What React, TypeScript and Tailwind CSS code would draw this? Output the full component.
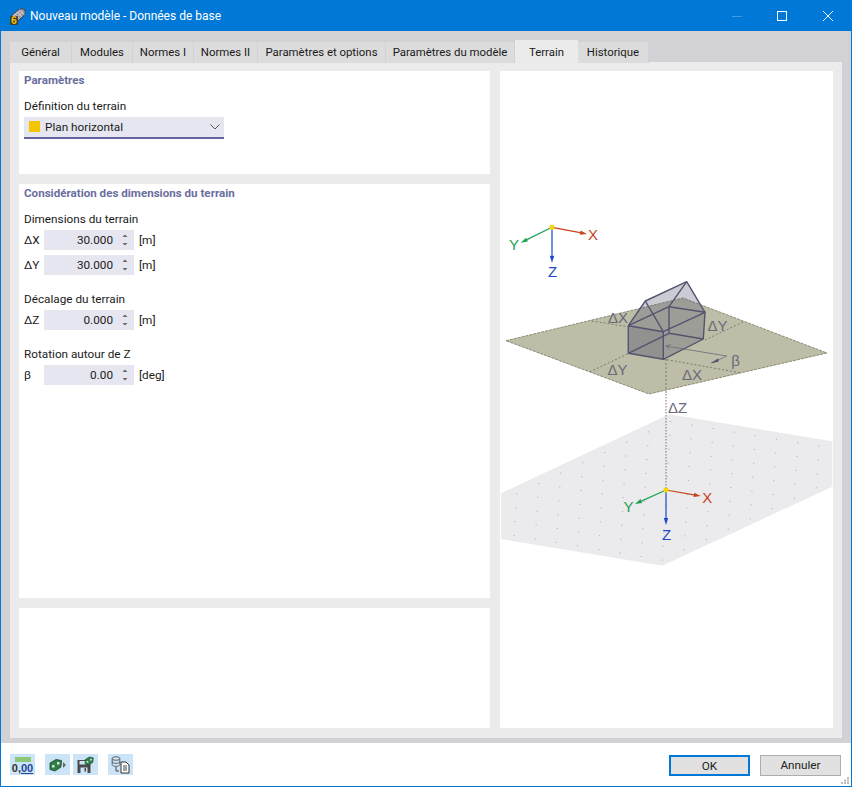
const FONT = "font-['Roboto',sans-serif]";

const TABS = [
  { label: "Général", w: "w-[62px]" },
  { label: "Modules", w: "w-[61px]" },
  { label: "Normes I", w: "w-[61px]" },
  { label: "Normes II", w: "w-[64px]" },
  { label: "Paramètres et options", w: "w-[128px]" },
  { label: "Paramètres du modèle", w: "w-[129px]" },
  { label: "Terrain", w: "w-[63px]", active: true },
  { label: "Historique", w: "w-[71px]" },
];

function TitleIcon() {
  return (
    <svg width="18" height="18" viewBox="0 0 18 18">
      <path d="M2.5 8.5 L10 2.5 Q13.5 0.5 15.8 3 Q17.2 6 15 8.5 L8.5 14.5 Z" fill="#9a9aa2" stroke="#34343c" strokeWidth="0.9" />
      <path d="M5.5 6.5 L10.5 12 M8 4.5 L13 10 M10.5 2.5 L15.5 8 M4 9.5 L11 3.5 M6 11.5 L14 5" stroke="#e2e2e6" strokeWidth="0.7" />
      <rect x="1" y="9" width="8" height="9" rx="1" fill="#3d3d38" />
      <text x="5" y="17.2" textAnchor="middle" fontSize="10.5" fontWeight="700" fill="#f2c200" fontFamily="Liberation Sans, sans-serif">6</text>
    </svg>
  );
}

function Spinner({ value, unit }: { value: string; unit: string }) {
  return (
    <div className="flex items-center">
      <div className="flex h-5 w-[90px] items-center bg-[#e6e6f0]">
        <span className="w-[69px] pt-[1px] text-right text-[#222]">{value}</span>
        <svg width="10" height="14" viewBox="0 0 10 14" className="ml-[7px]">
          <path d="M2.5 4 L5 1.5 L7.5 4 Z" fill="#666" />
          <path d="M2.5 10 L5 12.5 L7.5 10 Z" fill="#666" />
        </svg>
      </div>
      <span className="ml-[5px] pt-[1px]">{unit}</span>
    </div>
  );
}

function FieldRow({ label, value, unit, className }: { label: string; value: string; unit: string; className?: string }) {
  return (
    <div className={`flex items-center ${className ?? ""}`}>
      <span className="w-5 pt-[1px]">{label}</span>
      <Spinner value={value} unit={unit} />
    </div>
  );
}

function Axes({ o, x, y, z, lx, ly, lz }: { o: number[]; x: number[]; y: number[]; z: number[]; lx: number[]; ly: number[]; lz: number[] }) {
  const head = (from: number[], to: number[], color: string) => {
    const dx = to[0] - from[0];
    const dy = to[1] - from[1];
    const len = Math.hypot(dx, dy);
    const ux = dx / len;
    const uy = dy / len;
    const bx = to[0] - ux * 7;
    const by = to[1] - uy * 7;
    const pts = `${to[0]},${to[1]} ${bx - uy * 2.2},${by + ux * 2.2} ${bx + uy * 2.2},${by - ux * 2.2}`;
    return (
      <g>
        <line x1={from[0]} y1={from[1]} x2={bx} y2={by} stroke={color} strokeWidth="1.2" />
        <polygon points={pts} fill={color} />
      </g>
    );
  };
  return (
    <g fontFamily="Liberation Sans, sans-serif" fontSize="15" textAnchor="middle">
      {head(o, x, "#c8431c")}
      {head(o, y, "#1ea152")}
      {head(o, z, "#1c46c8")}
      <circle cx={o[0]} cy={o[1]} r="2.6" fill="#f4d40a" />
      <text x={lx[0]} y={lx[1]} fill="#c8431c">X</text>
      <text x={ly[0]} y={ly[1]} fill="#1ea152">Y</text>
      <text x={lz[0]} y={lz[1]} fill="#1c46c8">Z</text>
    </g>
  );
}

function TerrainPicture() {
  const dots: { x: number; y: number }[] = [];
  for (let i = 0; i < 13; i++) {
    for (let j = 0; j < 13; j++) {
      dots.push({ x: 670 + i * 21.17 - j * 22, y: 421 + i * 3.53 + j * 10.33 });
    }
  }
  const house = "#54546f";
  const dim = "#6b6b60";
  return (
    <svg width="333" height="657" viewBox="500 71 333 657" className="block">
      <clipPath id="lower">
        <polygon points="669.3,414.3 832.3,441.3 832.3,486.7 662.3,565.7 501,539 501,493.3" />
      </clipPath>
      <polygon points="669.3,414.3 832.3,441.3 832.3,486.7 662.3,565.7 501,539 501,493.3" fill="#ebebee" />
      <g clipPath="url(#lower)">
        {dots.map((d, i) => (
          <rect key={i} x={d.x} y={d.y} width="1.2" height="1" fill="#b4b4b8" />
        ))}
      </g>
      <line x1="666" y1="394" x2="666" y2="490" stroke="#70707a" strokeWidth="1" strokeDasharray="1.5 1.5" />

      <polygon points="506,340.7 683,298 827,353 649,394" fill="#bdbda8" stroke="#77775c" strokeWidth="0.8" strokeDasharray="3 1" />
      <g stroke={dim} strokeWidth="0.8" strokeDasharray="2 2" fill="none">
        <line x1="591.7" y1="321" x2="627.7" y2="326.7" />
        <line x1="705" y1="340" x2="743" y2="322" />
        <line x1="627.7" y1="354" x2="590" y2="371.7" />
        <line x1="663" y1="359" x2="740" y2="372.7" />
        <line x1="666" y1="359" x2="666" y2="394" />
      </g>

      <polygon points="628.3,325.7 645.3,301 686.7,281.7 705,312.3 703.3,339 663.3,359.3 628.3,353.3" fill="#54546f" fillOpacity="0.3" />
      <polygon points="628.3,325.7 663.3,331.7 663.3,359.3 628.3,353.3" fill="#54546f" fillOpacity="0.16" />
      <g stroke={house} strokeWidth="1.4" fill="none" strokeLinejoin="round">
        <polyline points="628.3,325.7 628.3,353.3 663.3,359.3 663.3,331.7 628.3,325.7" />
        <polyline points="663.3,359.3 703.3,339 705,312.3 669,306.7 669,333.3 703.3,339" />
        <polyline points="628.3,325.7 645.3,301 686.7,281.7 705,312.3" />
        <polyline points="645.3,301 663.3,331.7" />
        <polyline points="686.7,281.7 669,306.7 628.3,325.7" />
        <polyline points="663.3,331.7 705,312.3" />
        <polyline points="628.3,353.3 669,333.3" />
      </g>
      <g stroke="#6b6b76" strokeWidth="0.8" fill="none">
        <polyline points="665.7,346 726.7,356 712,363" />
        <polyline points="671,344.5 665.7,346 670,349.5" />
      </g>
      <polygon points="710,363.5 718,358.5 719,361.5" fill="#54546f" />

      <g fontFamily="Liberation Sans, sans-serif" fontSize="15" fill="#6a6a78" textAnchor="middle">
        <text x="618" y="323">ΔX</text>
        <text x="717.5" y="330.5">ΔY</text>
        <text x="617.5" y="374.5">ΔY</text>
        <text x="692" y="379.5">ΔX</text>
        <text x="735.5" y="365.5">β</text>
        <text x="677.5" y="413">ΔZ</text>
      </g>

      <Axes o={[552, 227.3]} x={[587, 234]} y={[520.7, 242.7]} z={[552, 262.7]} lx={[593, 240]} ly={[514, 249.5]} lz={[552.5, 277]} />
      <Axes o={[666, 490]} x={[700.7, 496]} y={[635, 504]} z={[666, 525]} lx={[707.3, 502.5]} ly={[628.5, 512]} lz={[666.5, 539.5]} />
    </svg>
  );
}

function ToolButton({ children }: { children: React.ReactNode }) {
  return <button className="flex h-[21px] w-[25px] items-center justify-center bg-[#cce4f7]">{children}</button>;
}

function GreenBlock() {
  return (
    <g>
      <path d="M1 5 L7 1.5 L12.5 2.5 L12 9 L6 13 L1 11.5 Z" fill="#2f7d45" stroke="#1b4528" strokeWidth="0.8" />
      <rect x="3" y="7" width="2.5" height="2.5" fill="#cfe8d4" />
      <rect x="8" y="4" width="2.5" height="2.5" fill="#cfe8d4" />
    </g>
  );
}

function Footer() {
  return (
    <div className="relative flex h-[43px] bg-white pt-[11px] pl-[9px] pr-[10px]">
      <ToolButton>
        <div className="flex flex-col items-center">
          <div className="mb-[1px] h-[5px] w-[16px] bg-[#8cc878]" />
          <span className="font-['Liberation_Sans',sans-serif] text-[11px] leading-[10px] font-bold text-[#333]">
            0,<span className="text-[#22459c] underline">00</span>
          </span>
        </div>
      </ToolButton>
      <div className="ml-[10px]">
        <ToolButton>
          <svg width="17" height="14" viewBox="0 0 17 14">
            <GreenBlock />
            <path d="M14 4 L17 7 L14 10 Z" fill="#666" />
          </svg>
        </ToolButton>
      </div>
      <div className="ml-[3px]">
        <ToolButton>
          <svg width="17" height="17" viewBox="0 0 17 17">
            <path d="M0.5 4 H12 L13.5 5.5 V17 H0.5 Z" fill="#4a4a4a" />
            <rect x="2.5" y="5" width="7" height="3.5" fill="#cce4f7" />
            <rect x="3.5" y="11.5" width="7" height="5.5" fill="#cce4f7" />
            <rect x="7.5" y="12" width="1.5" height="3.5" fill="#4a4a4a" />
            <g transform="translate(7.5 0) scale(0.7)">
              <GreenBlock />
            </g>
          </svg>
        </ToolButton>
      </div>
      <div className="ml-[10px]">
        <ToolButton>
          <svg width="19" height="18" viewBox="0 0 19 18">
            <ellipse cx="5" cy="2.5" rx="3.8" ry="1.8" fill="#cce4f7" stroke="#555" strokeWidth="0.9" />
            <path d="M1.2 2.5 V8.5 C1.2 11 8.8 11 8.8 8.5 V2.5 M1.2 5.5 C1.2 8 8.8 8 8.8 5.5" fill="none" stroke="#555" strokeWidth="0.9" />
            <path d="M5 11 V15 H8" fill="none" stroke="#444" strokeWidth="1" />
            <path d="M10 6 H15 L18 9 V17 H10 Z" fill="#fff" stroke="#333" strokeWidth="1" />
            <path d="M12 10 H16 M12 12 H16 M12 14 H16" stroke="#333" strokeWidth="0.9" />
          </svg>
        </ToolButton>
      </div>
      <button className="ml-auto mt-[1px] h-[21px] w-[81px] border-2 border-[#0078d7] bg-[#e1e1e1] pt-px text-[#222]">OK</button>
      <button className="ml-[10px] mt-[1px] h-[21px] w-[81px] border border-[#adadad] bg-[#e1e1e1] pt-px text-[#222]">Annuler</button>
      <svg width="9" height="7" viewBox="0 0 9 7" className="absolute right-[1px] bottom-[2px]">
        <g fill="#bcbcbc">
          <rect x="6" y="0" width="2" height="2" />
          <rect x="3" y="2.5" width="2" height="2" />
          <rect x="6" y="2.5" width="2" height="2" />
          <rect x="0" y="5" width="2" height="2" />
          <rect x="3" y="5" width="2" height="2" />
          <rect x="6" y="5" width="2" height="2" />
        </g>
      </svg>
    </div>
  );
}

export default function App() {
  return (
    <div className={`${FONT} h-[787px] w-[852px] overflow-hidden border border-[#0078d7] bg-[#d2d1d5] text-[11.75px] text-[#1a1a1a]`}>
      {/* title bar */}
      <div className="flex h-[30px] items-center bg-[#0078d7] pl-[8px] text-white">
        <TitleIcon />
        <span className="ml-[3px] text-[12px]">Nouveau modèle - Données de base</span>
        <div className="ml-auto flex items-center">
          <div className="h-px w-[10px] bg-[#3f9be3]" />
          <div className="ml-[35px] h-[10px] w-[10px] border border-white" />
          <svg width="10" height="10" viewBox="0 0 10 10" className="ml-[36px] mr-[18px]">
            <path d="M0 0 L10 10 M10 0 L0 10" stroke="#fff" strokeWidth="1" />
          </svg>
        </div>
      </div>

      <div className="px-[9px] pt-[9px]">
        {/* tabs */}
        <div className="relative z-10 -mb-px flex h-[23px] items-end text-[11.4px]">
          {TABS.map((t) =>
            t.active ? (
              <div key={t.label} className={`${t.w} flex h-[23px] items-center justify-center bg-[#ebebeb] pt-[3px]`}>
                {t.label}
              </div>
            ) : (
              <div key={t.label} className={`${t.w} flex h-[21px] items-center justify-center border-r border-[#d2d1d5] bg-[#dcdcdc] pt-[1px]`}>
                {t.label}
              </div>
            ),
          )}
        </div>

        {/* tab page */}
        <div className="flex h-[676px] w-[832px] gap-[10px] bg-[#ebebeb] pt-[9px] pl-[9px]">
          <div className="flex w-[471px] flex-col gap-[10px]">
            <section className="h-[103px] bg-white pl-[5px]">
              <h2 className="h-[18px] text-[11.6px] leading-[19px] font-bold text-[#6a6e9e]">Paramètres</h2>
              <div className="mt-[8px] h-[18px] leading-[19px]">Définition du terrain</div>
              <div className="mt-[2px] flex h-[22px] w-[200px] items-center border-b-2 border-[#6464a4] bg-[#e6e6f0] pl-[5px]">
                <span className="mt-[-1px] h-[11px] w-[11px] bg-[#f5c400]" />
                <span className="ml-[5px] pt-[1px]">Plan horizontal</span>
                <svg width="10" height="6" viewBox="0 0 10 6" className="ml-auto mr-[4px]">
                  <path d="M0.5 0.5 L5 5 L9.5 0.5" fill="none" stroke="#555" strokeWidth="1" />
                </svg>
              </div>
            </section>

            <section className="h-[414px] bg-white pl-[5px]">
              <h2 className="h-[18px] text-[11.6px] leading-[19px] font-bold text-[#6a6e9e]">Considération des dimensions du terrain</h2>
              <div className="mt-[8px] h-[18px] leading-[19px]">Dimensions du terrain</div>
              <FieldRow className="mt-[2px]" label="ΔX" value="30.000" unit="[m]" />
              <FieldRow className="mt-[5px]" label="ΔY" value="30.000" unit="[m]" />
              <div className="mt-[15px] h-[18px] leading-[19px]">Décalage du terrain</div>
              <FieldRow className="mt-[2px]" label="ΔZ" value="0.000" unit="[m]" />
              <div className="mt-[15px] h-[18px] leading-[19px]">Rotation autour de Z</div>
              <FieldRow className="mt-[2px]" label="β" value="0.00" unit="[deg]" />
            </section>

            <section className="h-[120px] bg-white" />
          </div>

          <div className="h-[657px] w-[333px] bg-white">
            <TerrainPicture />
          </div>
        </div>
        <div className="h-[5px]" />
      </div>

      <Footer />
    </div>
  );
}
